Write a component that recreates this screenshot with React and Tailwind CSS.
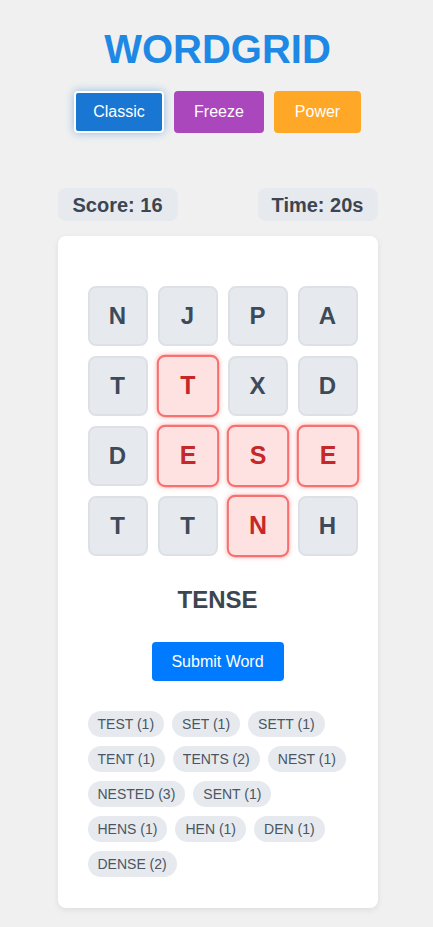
import { useState } from "react";

const GRID = [
  ["N", "J", "P", "A"],
  ["T", "T", "X", "D"],
  ["D", "E", "S", "E"],
  ["T", "T", "N", "H"],
];

const PATH = ["1-1", "2-1", "2-2", "3-2", "2-3"];

const FOUND = [
  ["TEST", 1], ["SET", 1], ["SETT", 1], ["TENT", 1], ["TENTS", 2], ["NEST", 1],
  ["NESTED", 3], ["SENT", 1], ["HENS", 1], ["HEN", 1], ["DEN", 1], ["DENSE", 2],
];

export default function App() {
  const [mode, setMode] = useState("classic");

  const modes = [
    { id: "classic", label: "Classic", cls: "bg-[#1976d2] w-[90px]" },
    { id: "freeze", label: "Freeze", cls: "bg-[#ab47bc] w-[90px]" },
    { id: "power", label: "Power", cls: "bg-[#ffa726] w-[87px]" },
  ];

  return (
    <div className="min-h-[927px] bg-[#f0f0f0] pl-[2px] font-['Liberation_Sans',Arial,sans-serif] flex flex-col items-center">
      <h1 className="mt-[26px] text-[40px] leading-[46px] font-bold text-[#1e88e5]">WORDGRID</h1>

      <div className="mt-[19px] flex gap-[10px]">
        {modes.map((m) => (
          <button
            key={m.id}
            onClick={() => setMode(m.id)}
            className={`h-[42px] rounded-[4px] text-white text-[16px] ${m.cls} ${
              mode === m.id ? "border-2 border-white shadow-[0_0_8px_rgba(25,118,210,0.45)]" : "border-2 border-transparent"
            }`}
          >
            {m.label}
          </button>
        ))}
      </div>

      <div className="mt-[55px] w-[320px] flex justify-between">
        <div className="h-[33px] w-[120px] rounded-[8px] bg-[#e6eaee] flex items-center justify-center text-[20px] font-bold text-[#3d4550]">
          Score: 16
        </div>
        <div className="h-[33px] w-[120px] rounded-[8px] bg-[#e6eaee] flex items-center justify-center text-[20px] font-bold text-[#3d4550]">
          Time: 20s
        </div>
      </div>

      <div className="mt-[15px] w-[320px] bg-white rounded-[8px] shadow-[0_2px_6px_rgba(0,0,0,0.08)] pt-[50px] pb-[31px] flex flex-col">
        <div className="pl-[30px] grid grid-cols-[repeat(4,60px)] gap-[10px]">
          {GRID.map((row, r) =>
            row.map((ch, c) => {
              const on = PATH.includes(`${r}-${c}`);
              return (
                <div
                  key={`${r}-${c}`}
                  className={`h-[60px] w-[60px] rounded-[8px] border-2 flex items-center justify-center text-[24px] font-bold ${
                    on
                      ? "bg-[#fee2e2] border-[#f87171] text-[#c62828] scale-[1.04] shadow-[0_0_4px_rgba(248,113,113,0.4)]"
                      : "bg-[#e6eaee] border-[#dde1e6] text-[#3d4a5a]"
                  }`}
                >
                  {ch}
                </div>
              );
            })
          )}
        </div>

        <div className="mt-[30px] text-center text-[24px] leading-[28px] font-bold text-[#3d4550]">TENSE</div>

        <div className="mt-[28px] flex justify-center">
          <button className="h-[39px] w-[132px] rounded-[4px] bg-[#007bff] text-white text-[16px]">Submit Word</button>
        </div>

        <div className="mt-[30px] pl-[30px] pr-[26px] flex flex-wrap gap-x-[8px] gap-y-[9px]">
          {FOUND.map(([w, n]) => (
            <span key={w} className="h-[26px] px-[10px] rounded-full bg-[#e6eaee] text-[14px] text-[#4b5563] flex items-center">
              {w} ({n})
            </span>
          ))}
        </div>
      </div>
    </div>
  );
}
